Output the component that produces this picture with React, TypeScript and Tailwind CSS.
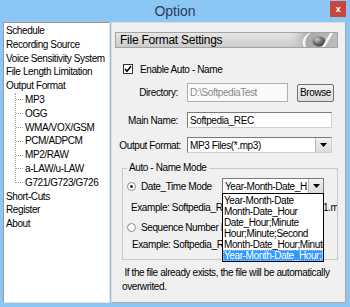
const TREE_TOP = ['Schedule', 'Recording Source', 'Voice Sensitivity System', 'File Length Limitation', 'Output Format'];
const TREE_FORMATS = ['MP3', 'OGG', 'WMA/VOX/GSM', 'PCM/ADPCM', 'MP2/RAW', 'a-LAW/u-LAW', 'G721/G723/G726'];
const TREE_BOTTOM = ['Short-Cuts', 'Register', 'About'];

const NAME_MODES = [
  'Year-Month-Date',
  'Month-Date_Hour',
  'Date_Hour;Minute',
  'Hour;Minute;Second',
  'Month-Date_Hour;Minute',
  'Year-Month-Date_Hour;Minute',
];

function Arrow() {
  return (
    <svg width="7" height="4" viewBox="0 0 7 4">
      <path d="M0 0H7L3.5 4Z" fill="#000" />
    </svg>
  );
}

function DropButton({ w }: { w: string }) {
  return (
    <div className={`${w} h-full flex items-center justify-center bg-gradient-to-b from-[#f2f2f2] to-[#dcdcdc] border-l border-[#b5b5b5]`}>
      <Arrow />
    </div>
  );
}

function TitleBar() {
  return (
    <div className="relative h-[22px] flex items-center justify-center">
      <span className="text-[14px] tracking-normal text-[#2b3d55]">Option</span>
      <div className="absolute right-[4px] top-[1px] w-[16px] h-[16px] bg-[#c7463e] flex items-center justify-center">
        <span className="text-white text-[9px] font-bold leading-none">x</span>
      </div>
    </div>
  );
}

function Tree() {
  return (
    <div className="w-[107px] bg-white border-t border-l border-[#9a9a9a] border-r border-b border-r-[#e3e3e3] border-b-[#e3e3e3] pt-[1px] pl-[2px] leading-[13.8px]">
      {TREE_TOP.map((item) => (
        <div key={item} className="h-[13.8px] whitespace-nowrap">{item}</div>
      ))}
      <div className="relative pl-[10px]">
        <div className="absolute left-[9px] top-0 bottom-[7px] border-l border-dotted border-[#a0a0a0]" />
        {TREE_FORMATS.map((item) => (
          <div key={item} className="h-[13.8px] flex items-center whitespace-nowrap">
            <span className="w-[7px] border-t border-dotted border-[#a0a0a0] mr-[2px]" />
            <span>{item}</span>
          </div>
        ))}
      </div>
      {TREE_BOTTOM.map((item) => (
        <div key={item} className="h-[13.8px] whitespace-nowrap">{item}</div>
      ))}
    </div>
  );
}

function HeaderLogo() {
  return (
    <svg width="48" height="14" viewBox="0 0 48 14">
      <defs>
        <linearGradient id="band" x1="0" x2="1" y1="0" y2="0">
          <stop offset="0" stopColor="#cbcbcb" stopOpacity="0" />
          <stop offset="0.4" stopColor="#a9a9a9" />
          <stop offset="1" stopColor="#bdbdbd" />
        </linearGradient>
        <radialGradient id="ball" cx="0.35" cy="0.3" r="0.75">
          <stop offset="0" stopColor="#d0d0d0" />
          <stop offset="0.45" stopColor="#7a7a7a" />
          <stop offset="1" stopColor="#3a3a3a" />
        </radialGradient>
      </defs>
      <rect x="0" y="0" width="48" height="14" fill="url(#band)" />
      <path d="M15 14C12 10 14 3 20 0H22C16.5 3 15 10 17 14Z" fill="#f6f6f6" />
      <ellipse cx="30" cy="8.5" rx="6.5" ry="5" fill="url(#ball)" />
      <path d="M33 14L41 0H44L36 14Z" fill="#f6f6f6" />
    </svg>
  );
}

function Radio({ checked }: { checked?: boolean }) {
  return (
    <span className="w-[9px] h-[9px] rounded-full border border-[#8a8a8a] bg-white flex items-center justify-center shrink-0">
      {checked && <span className="w-[3px] h-[3px] rounded-full bg-[#1a1a1a]" />}
    </span>
  );
}

function SettingsPanel() {
  return (
    <div className="flex-1 ml-[1px] bg-[#f0f0f0] border border-[#dcdcdc] border-r-[#a8a8a8] border-b-[#a8a8a8] flex flex-col">
      <div className="mt-[9px] ml-[3px] w-[223px] h-[16px] flex items-center border border-[#a3a3a3] bg-gradient-to-b from-[#e6e6e6] to-[#cbcbcb]">
        <span className="pl-[4px] text-[12px] tracking-[-0.25px]">File Format Settings</span>
        <div className="ml-auto flex items-center">
          <HeaderLogo />
        </div>
      </div>

      <div className="mt-[16px] ml-[11px] h-[10px] flex items-center">
        <span className="w-[10px] h-[10px] border border-[#333] bg-white flex items-center justify-center">
          <svg width="8" height="8" viewBox="0 0 8 8">
            <path d="M1 4L3 6.2L7 1.2" fill="none" stroke="#000" strokeWidth="1.6" />
          </svg>
        </span>
        <span className="ml-[7px]">Enable Auto - Name</span>
      </div>

      <div className="mt-[9px] h-[19px] flex items-center">
        <span className="w-[66px] text-right">Directory:</span>
        <div className="ml-[9px] w-[101px] h-full border border-[#b0b0b0] bg-[#fafafa] flex items-center pl-[2px] text-[#8a8a8a]">
          D:\SoftpediaTest
        </div>
        <div className="ml-[9px] w-[37px] h-[18px] border border-[#707070] rounded-[2px] bg-gradient-to-b from-[#f2f2f2] to-[#dddddd] flex items-center justify-center">
          Browse
        </div>
      </div>

      <div className="mt-[10px] h-[16px] flex items-center">
        <span className="w-[66px] text-right">Main Name:</span>
        <div className="ml-[9px] w-[145px] h-full border border-[#7a7a7a] border-r-[#d0d0d0] border-b-[#d0d0d0] bg-white flex items-center pl-[2px]">
          Softpedia_REC
        </div>
      </div>

      <div className="mt-[9px] h-[16px] flex items-center">
        <span className="w-[69px] text-right">Output Format:</span>
        <div className="ml-[6px] w-[145px] h-full border border-[#7a7a7a] border-r-[#d0d0d0] border-b-[#d0d0d0] bg-white flex items-center">
          <span className="pl-[2px] flex-1">MP3 Files(*.mp3)</span>
          <DropButton w="w-[16px]" />
        </div>
      </div>

      <fieldset className="mt-[9px] ml-[10px] w-[216px] h-[98px] border border-[#c9c9c9]">
        <legend className="ml-[4px] px-[2px] leading-[12px]">Auto - Name Mode</legend>

        <div className="mt-[4px] h-[16px] flex items-center">
          <span className="ml-[4px]"><Radio checked /></span>
          <span className="ml-[5px] w-[81px] whitespace-nowrap">Date_Time Mode</span>
          <div className="relative w-[102px] h-full border border-[#7a7a7a] bg-white flex items-center">
            <span className="pl-[2px] flex-1 overflow-hidden whitespace-nowrap">Year-Month-Date_H</span>
            <DropButton w="w-[15px]" />
            <div className="absolute left-[-1px] top-[14px] w-[102px] border border-black bg-white pt-[1px] z-10">
              {NAME_MODES.map((mode, i) => (
                <div
                  key={mode}
                  className={`h-[11px] leading-[11px] pl-[1px] whitespace-nowrap overflow-hidden ${
                    i === NAME_MODES.length - 1 ? 'bg-[#3399ff] text-white outline outline-1 outline-dotted outline-[#a8c8ff] -outline-offset-1' : ''
                  }`}
                >
                  {mode}
                </div>
              ))}
            </div>
          </div>
        </div>

        <div className="mt-[8px] ml-[8px] h-[12px] leading-[12px] w-[206px] overflow-hidden whitespace-nowrap">
          Example: Softpedia_REC_2013-11-22_15;40;51.mp3
        </div>

        <div className="mt-[7px] h-[12px] flex items-center">
          <span className="ml-[4px]"><Radio /></span>
          <span className="ml-[5px] whitespace-nowrap">Sequence Number Mode</span>
        </div>

        <div className="mt-[6px] ml-[9px] h-[12px] leading-[12px] whitespace-nowrap">
          Example: Softpedia_REC_0001.mp3
        </div>
      </fieldset>

      <div className="mt-[6px] ml-[10px] leading-[14px] whitespace-nowrap">
        &nbsp;If the file already exists, the file will be automatically
        <br />
        overwrited.
      </div>
    </div>
  );
}

export default function App() {
  return (
    <div className="w-[350px] h-[307px] bg-[#8cc6f5] flex flex-col overflow-hidden font-['Liberation_Sans',Arial,sans-serif] text-[10px] tracking-[-0.4px] text-black">
      <TitleBar />
      <div className="flex h-[281px] pl-[3px] pr-[4px]">
        <Tree />
        <SettingsPanel />
      </div>
    </div>
  );
}
